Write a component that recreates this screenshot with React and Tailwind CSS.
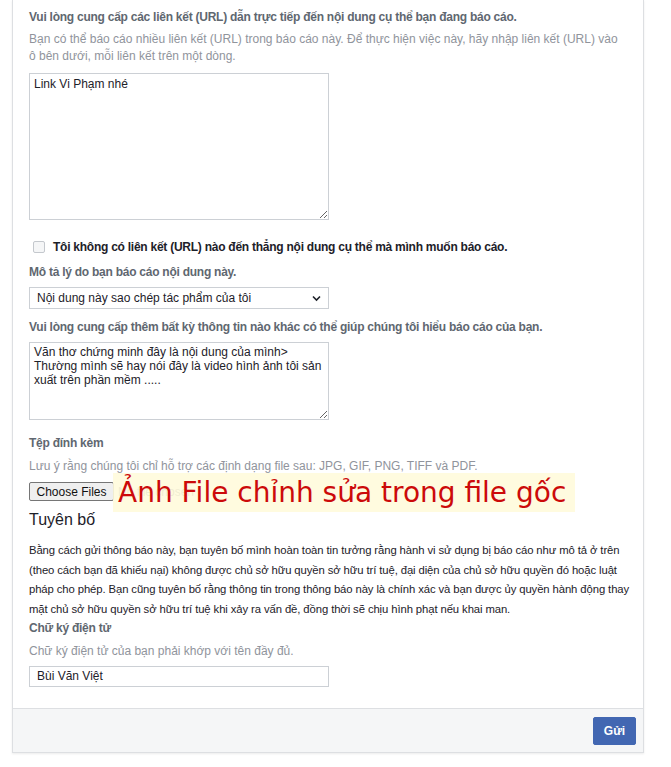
import React from 'react'

const font = { fontFamily: '"Liberation Sans", Arial, sans-serif' }

const Label = ({ children, className = '' }) => (
  <div className={`text-[12px] leading-[16px] font-bold tracking-[-0.25px] text-[#606770] ${className}`}>{children}</div>
)

const Hint = ({ children, className = '' }) => (
  <div className={`text-[12px] leading-[17px] text-[#90949c] ${className}`}>{children}</div>
)

export default function App() {
  return (
    <div className="min-h-[767px] bg-white text-[#1d2129]" style={font}>
      <div className="ml-[12px] w-[632px] border-x border-b border-[#dddfe2] bg-white shadow-[0_1px_2px_rgba(0,0,0,0.08)]">
        <div className="pl-[16px] pr-[16px] pt-[9px] pb-[21px]">
          <Label>Vui lòng cung cấp các liên kết (URL) dẫn trực tiếp đến nội dung cụ thể bạn đang báo cáo.</Label>
          <Hint className="mt-[6px]">
            Bạn có thể báo cáo nhiều liên kết (URL) trong báo cáo này. Để thực hiện việc này, hãy nhập liên kết (URL) vào
            <br />ô bên dưới, mỗi liên kết trên một dòng.
          </Hint>
          <textarea
            defaultValue="Link Vi Phạm nhé"
            className="mt-[8px] block h-[147px] w-[300px] border border-[#ccd0d5] px-[4px] py-[3px] text-[12px] leading-[14px] text-[#1d2129] outline-none"
          />

          <label className="mt-[19px] flex items-center gap-[8px]">
            <span className="ml-[4px] block h-[12px] w-[12px] rounded-[2px] border border-[#c4c8cd] bg-[#f5f6f7]" />
            <span className="text-[12px] leading-[16px] font-bold tracking-[-0.25px] text-[#1d2129]">
              Tôi không có liên kết (URL) nào đến thẳng nội dung cụ thể mà mình muốn báo cáo.
            </span>
          </label>

          <Label className="mt-[9px]">Mô tả lý do bạn báo cáo nội dung này.</Label>
          <div className="relative mt-[7px] h-[22px] w-[300px] border border-[#ccd0d5] bg-white">
            <div className="pl-[7px] text-[12px] leading-[20px] text-[#1d2129]">Nội dung này sao chép tác phẩm của tôi</div>
            <svg className="absolute right-[7px] top-[6px]" width="9" height="8" viewBox="0 0 9 8">
              <path d="M1 2.5 L4.5 6 L8 2.5" fill="none" stroke="#1d2129" strokeWidth="1.6" />
            </svg>
          </div>

          <Label className="mt-[10px]">Vui lòng cung cấp thêm bất kỳ thông tin nào khác có thể giúp chúng tôi hiểu báo cáo của bạn.</Label>
          <textarea
            defaultValue={'Văn thơ chứng minh đây là nội dung của mình>\nThường mình sẽ hay nói đây là video hình ảnh tôi sản xuất trên phần mềm .....'}
            className="mt-[7px] block h-[78px] w-[300px] resize-y border border-[#ccd0d5] px-[4px] py-[2px] text-[12px] leading-[14px] text-[#1d2129] outline-none"
          />

          <Label className="mt-[15px]">Tệp đính kèm</Label>
          <Hint className="mt-[7px]">Lưu ý rằng chúng tôi chỉ hỗ trợ các định dạng file sau: JPG, GIF, PNG, TIFF và PDF.</Hint>
          <div className="relative mt-[7px] flex h-[19px] items-center gap-[4px]">
            <div className="flex h-[19px] w-[85px] items-center justify-center rounded-[2px] border border-[#767676] bg-[#efefef] text-[12px] text-[#111]">
              Choose Files
            </div>
            <span className="text-[12px] text-[#606770]">No file chosen</span>
            <div
              className="absolute left-[84px] top-[-9px] flex h-[39px] w-[462px] items-center bg-[#fffbdc]/90 pl-[5px] text-[28px] leading-none text-[#cc0a0a]"
              style={{ fontFamily: '"DejaVu Sans", Verdana, sans-serif' }}
            >
              Ảnh File chỉnh sửa trong file gốc
            </div>
          </div>

          <div className="mt-[9px] text-[16px] leading-[20px] text-[#1d2129]">Tuyên bố</div>
          <div className="mt-[11px] whitespace-nowrap text-[11.3px] leading-[19.5px] tracking-[-0.1px] text-[#1d2129]">
            <div>Bằng cách gửi thông báo này, bạn tuyên bố mình hoàn toàn tin tưởng rằng hành vi sử dụng bị báo cáo như mô tả ở trên</div>
            <div>(theo cách bạn đã khiếu nại) không được chủ sở hữu quyền sở hữu trí tuệ, đại diện của chủ sở hữu quyền đó hoặc luật</div>
            <div>pháp cho phép. Bạn cũng tuyên bố rằng thông tin trong thông báo này là chính xác và bạn được ủy quyền hành động thay</div>
            <div>mặt chủ sở hữu quyền sở hữu trí tuệ khi xảy ra vấn đề, đồng thời sẽ chịu hình phạt nếu khai man.</div>
          </div>

          <Label className="mt-[1px]">Chữ ký điện tử</Label>
          <Hint className="mt-[7px]">Chữ ký điện tử của bạn phải khớp với tên đầy đủ.</Hint>
          <div className="mt-[6px] h-[21px] w-[300px] border border-[#ccd0d5] bg-white pl-[7px] text-[12px] leading-[19px] text-[#1d2129]">
            Bùi Văn Việt
          </div>
        </div>

        <div className="flex justify-end border-t border-[#dddfe2] bg-[#f5f6f7] pb-[7px] pr-[7px] pt-[8px]">
          <button className="h-[28px] w-[43px] rounded-[2px] border border-[#4267b2] bg-[#4267b2] text-[12px] font-bold text-white">
            Gửi
          </button>
        </div>
      </div>
    </div>
  )
}
